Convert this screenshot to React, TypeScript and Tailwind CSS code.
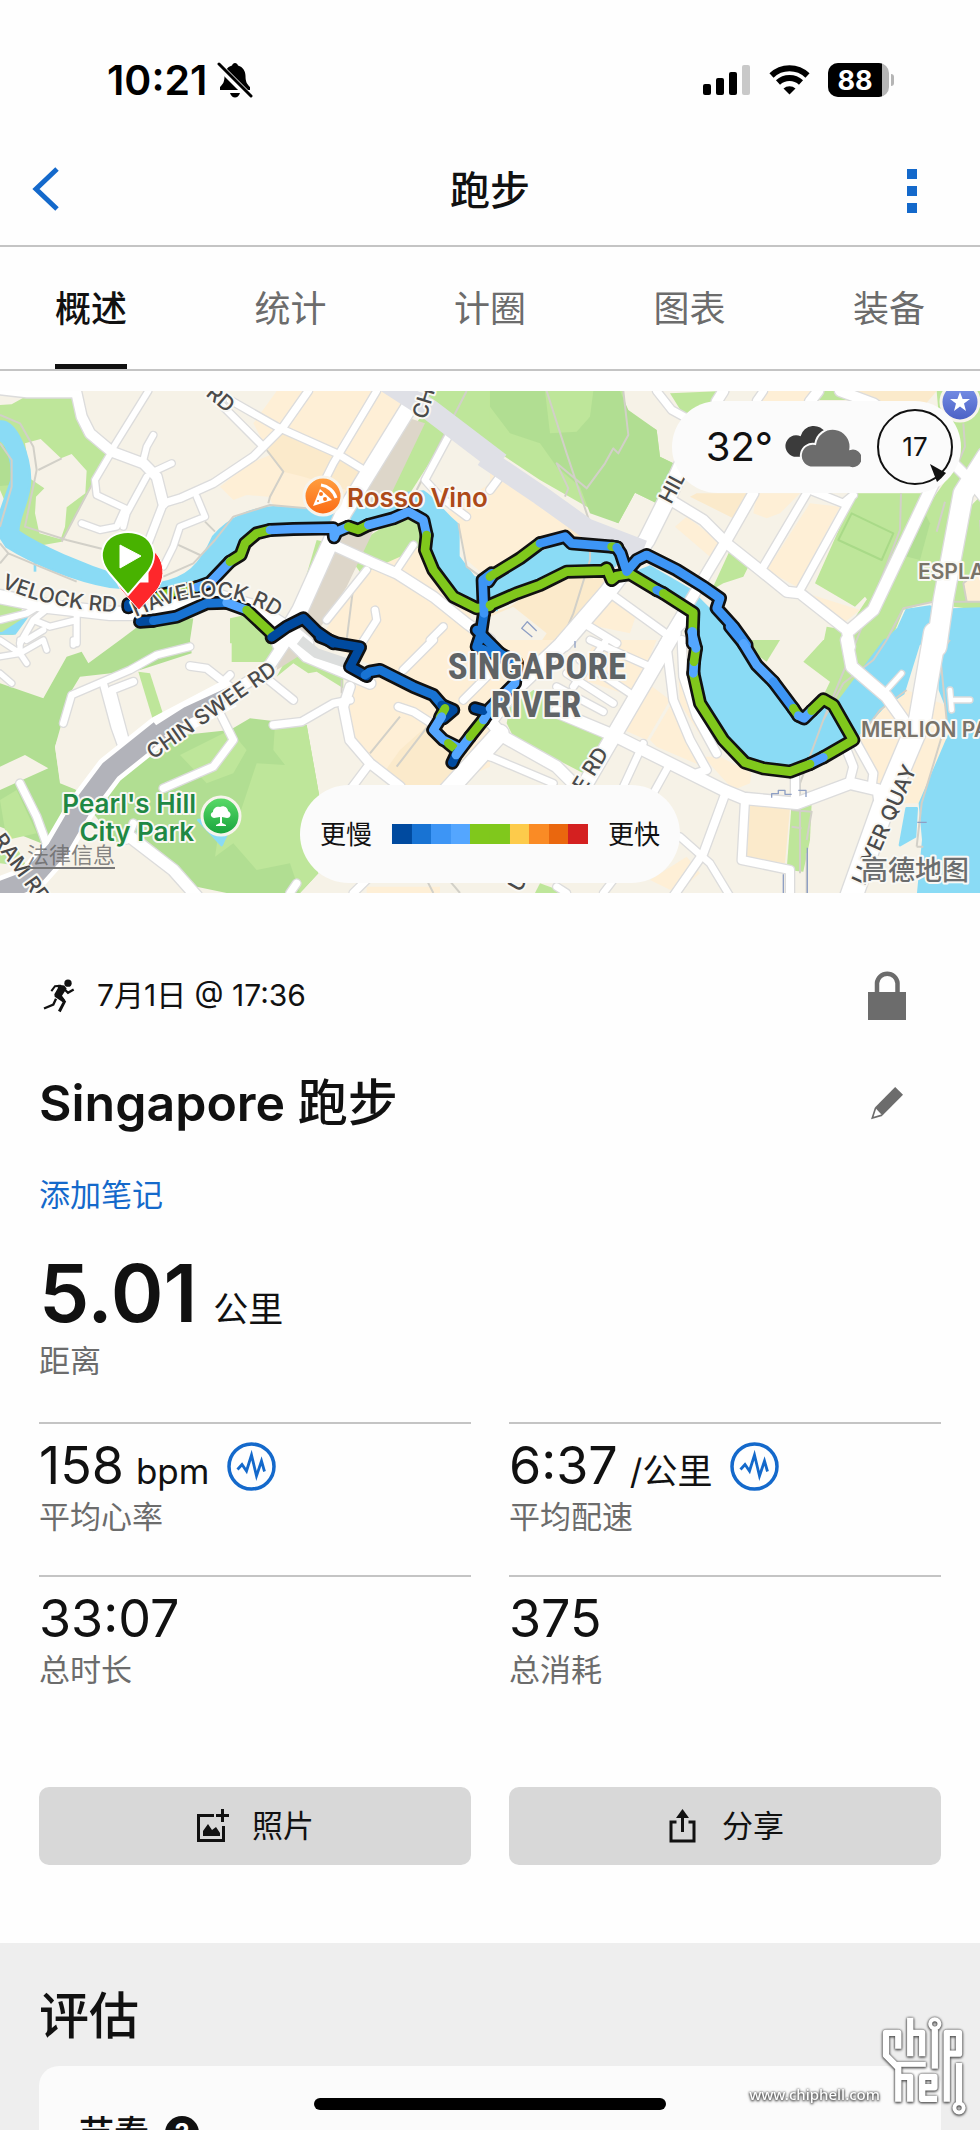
import type { ReactNode } from 'react'

const tabs = ['概述', '统计', '计圈', '图表', '装备']

const paceColors = [
  '#004a9f', '#1873d3', '#3d95f5', '#54a6ff', '#80c81c',
  '#80c81c', '#fdcb4b', '#fa8b25', '#ea670e', '#d42020',
]

type Road = [width: number, d: string]

type Sheet = {
  x: number
  y: number
  areas: [fill: string, d: string][]
  water: string[]
  paths: string
  roads: Road[]
  highways: [color: string, width: number, d: string][]
  route: [color: string, d: string][]
}

const PARK = '#bee69a'
const WOOD = '#b1de92'
const SHOP = '#feefd6'
const MALL = '#fbeacb'
const LAND = '#f6f2e7'
const RAIL = '#ddd6c9'

const NAVY = '#004a9f'
const BLUE = '#1873d3'
const MID = '#3d95f5'
const SKY = '#54a6ff'
const LIME = '#80c81c'

// The map is split into four sheets, three units to a pixel.
const sheets: Sheet[] = [
  {
    x: 0,
    y: -33,
    areas: [
      [PARK, 'M0 75 35 73 85 45H228L245 120 265 160 325 225 185 485 100 500 60 470 0 330Z'],
      [LAND, 'M75 190 122 177 183 235 215 222 260 272 256 340 200 382 195 440 182 478 118 460 105 400 108 350 133 325 93 298Z'],
      [WOOD, 'M0 190 25 210 35 250V315L0 318Z'],
      [SHOP, 'M830 33H1240L1020 400 820 375 805 350 740 345 700 360 660 320 740 255 810 225 760 130Z'],
      [MALL, 'M800 210 850 145 1015 220 1095 275 1040 330 910 290 850 275Z'],
      [PARK, 'M1290 33H1470V240L1270 105Z'],
      [PARK, 'M1265 105 1345 160 1230 340 1110 350Z'],
      [PARK, 'M1120 460 1200 410 1260 430 1260 500 1200 540 1160 560 1040 520Z'],
      [PARK, 'M950 480 990 490 940 590 915 600Z'],
      [PARK, 'M1040 520 1170 580 1160 675 1090 590Z'],
      [LAND, 'M1270 300 1360 170 1470 230V320L1390 410Z'],
      [SHOP, 'M1340 400 1470 310V600L1400 540 1375 430Z'],
      [SHOP, 'M1200 530 1260 500 1340 620 1410 700 1430 790H950L1090 580Z'],
      [RAIL, 'M1215 110 1275 130 1040 620 930 790H820L990 490Z'],
      [PARK, 'M0 650 60 655 70 720 40 765 0 765Z'],
      [WOOD, 'M360 780 420 735 580 715 570 780Z'],
      [PARK, 'M690 715 760 700 860 765 830 790H690Z'],
    ],
    water: [
      'M0 125C50 120 90 230 90 300C90 360 50 420 55 455C120 500 250 555 360 590L480 610C560 595 600 560 640 470C690 410 760 385 820 382L1020 395 1160 370 1210 340 1270 335C1310 360 1320 390 1375 435V530L1420 590 1490 620V690L1380 650 1300 560 1290 430 1220 400 1100 440 820 460 740 480 700 550 630 620 560 640 330 620C220 600 100 550 20 500L0 470V400L35 300C40 240 20 190 0 180Z',
      'M105 540V575',
      'M0 760H45L85 705',
    ],
    paths:
      'M0 105 60 130 100 200 110 270 75 440 200 480 320 510M115 270 185 235M0 190 35 240V320L0 440M0 490 25 520 120 560 230 605M0 550 25 520M320 230 185 485M800 210 850 275 810 350 805 370M490 590 580 550 645 480 700 410 810 375 920 385M1340 160 1250 330M525 490 600 525M615 425 645 455M1400 33 1350 130 1250 330M1375 430 1400 560 1470 610M1060 620 1040 780',
    roads: [
      [20, 'M0 33 80 42H225M1130 33 1000 250 960 330M690 60 830 140 1010 220 1100 275M650 60 790 200M1240 495 1190 570M1100 570 980 720M1125 690 1130 720 1085 790M1345 170 1275 300 1320 350 1400 410M1330 740 1290 780'],
      [18, 'M445 33 335 210M430 240 440 200 460 165M450 280 515 250M335 215 285 300 290 345 375 385 350 440 300 450 245 430M440 290 380 400 370 440M590 350 615 410 540 440 520 500 490 560'],
      [18, 'M150 680 100 720 60 790M230 700V790M130 750 80 780M230 720 150 740 100 720M0 720 80 700 130 670'],
      [30, 'M228 33 245 110 270 160 335 215 430 250 470 290 490 370M1010 500 1120 550 1190 580 1300 650 1400 730 1470 780'],
      [22, 'M490 370 540 355 640 310 760 230 850 140 925 33M490 370 440 500 400 600'],
      [46, 'M1240 60 1030 400 990 490 900 690 840 790'],
      [40, 'M0 650 150 680 330 700 430 700 560 660 640 645 760 680 870 750 920 790'],
    ],
    highways: [['#dfe0e6', 64, 'M1150 0 1290 90 1500 250']],
    route: [
      [LIME, 'M480 645 590 622'],
      [SKY, 'M590 622 630 608 690 545'],
      [LIME, 'M690 545 722 525 735 490 770 460 810 450'],
      [SKY, 'M810 450 880 447 1000 445 1002 472 1010 455 1045 440'],
      [LIME, 'M1045 440 1075 450 1105 435'],
      [SKY, 'M1105 435 1180 415 1225 395 1270 420 1280 465'],
      [LIME, 'M1280 465 1275 510 1300 570 1360 650 1430 685 1470 680'],
      [NAVY, 'M420 725 460 722'],
      [BLUE, 'M460 722 530 710 620 670 680 668'],
      [SKY, 'M680 668 740 690'],
      [LIME, 'M740 690 820 765'],
      [NAVY, 'M815 772 860 740 910 715 950 755 1000 790'],
      [NAVY, 'M385 672V682'],
      [BLUE, 'M1440 780 1452 700'],
      [MID, 'M1452 700 1448 600 1475 580'],
    ],
  },
  {
    x: 1470,
    y: -33,
    areas: [
      [PARK, 'M0 33H400L410 95 500 150 510 230 550 250 520 320 500 370 435 338 385 430 325 400 150 300 0 200Z'],
      [WOOD, 'M0 33H390L415 90 500 150 510 230 550 250 500 370 435 338 385 430 300 400 270 320 200 260 150 190 60 160 0 80Z'],
      [PARK, 'M165 33H310L300 110 260 155 180 160Z'],
      [PARK, 'M540 40 700 33 660 80 590 120Z'],
      [PARK, 'M980 33H1170L1100 60H960Z'],
      [PARK, 'M1095 340H1310L1140 670 1125 650 1095 680 975 610Z'],
      [PARK, 'M1340 340 1440 200 1340 660 1240 690 1200 790H1000L1010 740 1070 750Z'],
      [WOOD, 'M1290 370 1320 430 1290 540 1210 520Z'],
      [PARK, 'M1340 33H1470V250L1430 310 1350 150Z'],
      [PARK, 'M1420 400 1470 350V690L1390 680Z'],
      [PARK, 'M720 510 775 560 760 590 700 610 665 630Z'],
      [MALL, 'M0 280 30 270 320 430 470 500 340 650 200 790H0V700L60 680 220 560 380 540 200 480 0 580Z'],
      [SHOP, 'M0 280 30 270 240 400 230 470 0 570Z'],
      [LAND, 'M70 680 170 760 150 790H0V710Z'],
      [SHOP, 'M590 410 695 490 660 530 555 440Z'],
      [MALL, 'M620 340H780L740 420 650 375 600 350Z'],
      [SHOP, 'M800 340H930L870 400 830 415 790 400Z'],
      [SHOP, 'M960 370 1050 380 920 620 830 570Z'],
      [SHOP, 'M950 640 1110 690 1060 730 960 680Z'],
      [SHOP, 'M340 650 440 700 420 760 300 735Z'],
      [SHOP, 'M830 33H970L940 65H800Z'],
      [MALL, 'M1080 33H1340L1300 80H1150Z'],
      [SHOP, 'M1420 600 1470 560V665H1430Z'],
    ],
    water: [
      'M0 600 100 540 220 490 370 510 430 580 480 560 600 630 660 690 760 800H600L610 700 520 640 420 580 230 570 80 640 0 670Z',
      'M1180 790 1225 745 1250 690 1320 680 1345 690 1490 685V790Z',
    ],
    paths:
      'M400 33 415 165 385 220 370 205 345 250 290 325 200 250 235 325 225 350M170 33 230 220 300 430V540L250 700 215 780M1233 340 1230 450 1180 580 1100 780M1470 665H1330L1240 685 1190 780M1365 365 1340 455M1420 130 1425 200 1400 260M1470 420 1480 560 1420 610 1430 665',
    roads: [
      [22, 'M500 33 545 90 600 120M820 33 800 62M0 330 30 290M950 340 820 560M960 330 1060 370 1090 345M1085 350 930 630M360 640 540 770M600 710 520 790M290 735 380 790'],
      [30, 'M550 365 640 420 710 490 810 570 890 635 930 640 1070 750 1080 800M790 340 710 480 530 780'],
      [30, 'M1050 33 1150 70 1350 210 1440 300 1480 350M700 33 680 65M985 33 960 65'],
      [34, 'M1330 310 1150 690 1080 750'],
      [48, 'M610 180 530 360 470 480 350 640 220 790'],
      [58, 'M1490 230 1420 340 1360 660 1340 800'],
    ],
    highways: [['#dfe0e6', 60, 'M-20 230 150 345 290 445 460 510']],
    route: [
      [MID, 'M-5 605 5 590'],
      [LIME, 'M0 590 90 535 150 490'],
      [MID, 'M150 490 225 470 245 490 370 500'],
      [LIME, 'M365 500 382 502'],
      [LIME, 'M0 675 80 640 150 615 230 575 340 572 350 565 365 600 380 588 420 582 500 630'],
      [MID, 'M500 630 520 640'],
      [LIME, 'M520 640 610 698 608 755'],
      [SKY, 'M608 755V790'],
      [MID, 'M380 502 392 520 410 575 440 540 470 525 560 570 640 620 690 655 680 685 730 740 770 795'],
    ],
  },
  {
    x: 0,
    y: 747,
    areas: [
      [WOOD, 'M0 130 130 175 200 50 245 35 265 70 360 0H570L575 40 420 90 240 110 210 160 165 320 180 430 230 450 150 620 0 560V450L145 385 75 345 0 380Z'],
      [LAND, 'M165 320 215 180 310 140 350 300 290 265 320 320 230 450 180 420Z'],
      [LAND, 'M325 150 420 100 465 260 380 290Z'],
      [PARK, 'M415 95 450 100 495 240 465 260Z'],
      [PARK, 'M695 0H850L800 66H695Z'],
      [PARK, 'M890 0 1030 110V145L950 95 925 100 880 70 830 110Z'],
      [WOOD, 'M385 380 500 290 690 270 750 235 920 255 960 480 905 560 955 700 900 759H680L590 740 400 590 360 620 240 470Z'],
      [PARK, 'M825 252 920 255 960 480 905 560 955 700 900 759 870 670 770 690 700 610 645 650 660 550 720 520 770 370 855 375 820 330Z'],
      [PARK, 'M540 345 690 270 740 330 700 400 620 430Z'],
      [PARK, 'M0 480 50 450 110 580 20 600Z'],
      [PARK, 'M0 640 50 620 80 680 0 670Z'],
      [LAND, 'M150 740 400 590 590 759H130Z'],
      [SHOP, 'M1000 0H1470V380L1330 440H1190L1050 310 1040 220 1060 140 1170 100 990 20Z'],
      [MALL, 'M1200 330 1290 250 1370 380 1320 435H1210L1150 400Z'],
      [SHOP, 'M1100 740H1320V759H1100Z'],
      [RAIL, 'M870 0 910 40 830 90 840 30Z'],
    ],
    water: ['M595 540H700L665 615Z'],
    paths: 'M1200 230 1110 340M1290 250 1190 380M1025 120V160M0 740 30 700M1300 759 1270 700M1380 759 1330 700',
    roads: [
      [16, 'M0 50 60 40 80 70M60 40 130 0 140 30M220 0V15M0 0 60 40M0 100 35 130M60 0V40'],
      [22, 'M570 78 620 85 690 140M670 125 690 105M820 255 905 245 1000 190 1050 180M800 115 880 180M660 220 700 300 640 380 490 445M310 130 345 260 370 330M400 125 335 150 375 300M60 430 110 530 150 640M400 550 380 600M1195 200 1240 215 1310 260M1300 0 1210 90M1470 100 1390 180M1440 330 1470 350M890 730 870 759M1110 370 1050 450M1100 720 1060 759'],
      [20, 'M190 250 215 165 390 90 470 45 570 20'],
      [34, 'M390 590 520 690 590 769'],
      [28, 'M1050 140 1030 200 1050 300 1110 370 1200 440'],
      [32, 'M860 0 800 90 690 160M870 0 920 50 1040 100 1110 130'],
      [52, 'M1500 280 1300 500'],
    ],
    highways: [
      ['#ffffff', 88, 'M-40 770 90 720 170 630 240 510 330 390 480 270 690 160'],
      ['#b2b3ba', 60, 'M-40 770 90 720 170 630 240 510 330 390 480 270'],
      ['#b2b3ba', 38, 'M450 290 560 220 690 160'],
      ['#dcdedd', 30, 'M900 0 950 40 1040 70'],
    ],
    route: [
      [NAVY, 'M960 -10 1010 10 1080 22 1050 80 1100 108'],
      [BLUE, 'M1095 105 1110 95 1140 90 1240 140 1300 165 1330 200'],
      [NAVY, 'M1325 195 1360 210 1330 235'],
      [LIME, 'M1335 205 1320 232'],
      [SKY, 'M1325 230 1300 270 1330 300 1380 325'],
      [LIME, 'M1345 310 1360 322'],
      [NAVY, 'M1357 368 1370 340'],
      [SKY, 'M1368 345 1410 290'],
      [LIME, 'M1410 290 1450 240'],
      [SKY, 'M1450 240 1470 210'],
      [NAVY, 'M1425 205 1450 212'],
      [BLUE, 'M1440 -10 1430 20 1500 50'],
    ],
  },
  {
    x: 1470,
    y: 747,
    areas: [
      [SHOP, 'M0 0H200L60 150 0 200Z'],
      [SHOP, 'M320 0H500L430 170 250 110Z'],
      [SHOP, 'M380 260 460 120 540 180 470 300Z'],
      [SHOP, 'M480 300 545 190 640 380 500 320Z'],
      [SHOP, 'M560 0H590L610 130 690 345 640 300 570 190Z'],
      [SHOP, 'M640 350 690 350 785 400 780 430 730 450Z'],
      [PARK, 'M60 200 130 150 220 210 380 290 280 400 70 290 50 250Z'],
      [PARK, 'M735 0H870L830 65Z'],
      [PARK, 'M940 65 1000 0H1190L1140 80 1040 250 960 250 1020 125Z'],
      [MALL, 'M780 490 900 505 885 670 770 655Z'],
      [PARK, 'M905 490H965L960 600 940 695 890 690Z'],
      [SHOP, 'M480 720 590 650 630 700 560 759Z'],
      [PARK, 'M135 759 150 730 230 759Z'],
      [SHOP, 'M1110 290 1160 200 1250 150 1380 200 1370 300 1290 490H1210L1160 430Z'],
    ],
    water: [
      'M605 -20 620 110 660 240 760 360 900 395 1090 310 1010 190 940 240 830 110 700 -20Z',
      'M1185 0 1140 60 1020 220 1090 300 1180 200 1240 160 1290 0Z',
      'M1345 0H1480V759H1285L1300 600 1290 490 1380 280 1370 200 1350 150Z',
      'M1250 505 1280 505 1275 590 1230 615Z',
    ],
    paths:
      'M1380 0 1350 40 1370 240 1295 490 1280 620M1190 0 1150 60 1060 130 1000 240M1100 0 1000 240 930 430V700M905 510 965 515 950 600M905 560 935 565M1110 290 1170 210 1250 150M1280 620H1300M950 640V759',
    roads: [
      [14, 'M1385 180H1440M1385 210 1380 150M1235 100 1190 150'],
      [20, 'M300 0 480 80M270 60 420 160M230 100 370 190M200 140 340 215M350 0 250 140M0 350 190 430M460 310 400 440M540 370 490 460M340 759 370 720M570 590 660 670 720 769M200 740 230 759'],
      [24, 'M530 20 550 180 600 300 650 390 620 400M575 0 580 110 620 230 680 340M710 450 640 640 550 769M765 480 755 660 900 690V769M915 400V490M1070 330 1090 380 1080 420M1100 310 1150 400 1145 440'],
      [34, 'M-10 230 40 290 200 380 260 440M200 215 380 290 700 450 760 475 920 490 1080 430 1165 450 1175 520 1140 600M1070 0 1085 80 1190 170 1240 240'],
      [44, 'M240 -10 60 160 0 240M550 -20 270 460'],
      [66, 'M1335 -20 1290 240 1180 500 1080 780'],
    ],
    highways: [],
    route: [
      [BLUE, 'M-40 -30 30 40'],
      [BLUE, 'M30 40 80 68'],
      [SKY, 'M80 68 75 130 0 205'],
      [MID, 'M720 -40 765 15'],
      [SKY, 'M760 10 800 75 850 125'],
      [MID, 'M850 125 910 205'],
      [LIME, 'M910 205 925 227'],
      [SKY, 'M925 227 942 235 965 212'],
      [LIME, 'M965 212 1000 178 1030 195 1090 300 1000 352'],
      [SKY, 'M1000 352 960 372'],
      [LIME, 'M960 372 900 395 820 385 765 368 700 300 630 190 610 100'],
      [SKY, 'M610 100 612 65'],
      [LIME, 'M612 65 618 25'],
      [SKY, 'M618 25 605 -25'],
    ],
  },
]

function Layer({ draw }: { draw: (sheet: Sheet) => ReactNode }) {
  return (
    <>
      {sheets.map((sheet) => (
        <g key={`${sheet.x}/${sheet.y}`} transform={`translate(${sheet.x} ${sheet.y})`}>
          {draw(sheet)}
        </g>
      ))}
    </>
  )
}

function RouteMap() {
  return (
    <svg viewBox="0 0 980 502" className="block h-auto w-full bg-[#f6f2e7]" role="img" aria-label="Singapore 跑步路线">
      <defs>
        <path id="havelock-west" d="M1 196 C 30 210, 80 222, 130 221" />
        <path id="havelock-east" d="M136 226 C 176 208, 230 186, 292 238" />
        <linearGradient id="food" x1="0" x2="0" y1="0" y2="1">
          <stop offset="0" stopColor="#ff9f3f" />
          <stop offset="1" stopColor="#fb6a14" />
        </linearGradient>
        <linearGradient id="tree" x1="0" x2="0" y1="0" y2="1">
          <stop offset="0" stopColor="#5bdc69" />
          <stop offset="1" stopColor="#17a33c" />
        </linearGradient>
        <linearGradient id="star" x1="0" x2="0" y1="0" y2="1">
          <stop offset="0" stopColor="#7c95ea" />
          <stop offset="1" stopColor="#4a5fc4" />
        </linearGradient>
      </defs>

      <g transform="scale(0.33333)" fill="none" strokeLinejoin="round">
        <Layer draw={(s) => s.areas.map(([fill, d]) => <path key={d} d={d} fill={fill} />)} />
        <Layer
          draw={(s) => s.water.map((d) => <path key={d} d={d} fill="#8adbf5" stroke="#8adbf5" strokeWidth="8" />)}
        />
        <Layer draw={(s) => <path d={s.paths} stroke="#d2d0c8" strokeWidth="6" />} />
        <path d="M2555 367 2680 427 2645 507 2515 447Z" stroke="#a9da88" strokeWidth="6" />
        <Layer
          draw={(s) =>
            s.roads.map(([w, d]) => <path key={d} d={d} stroke="#dcdcdc" strokeWidth={w + 8} strokeLinecap="round" />)
          }
        />
        <Layer
          draw={(s) => s.roads.map(([w, d]) => <path key={d} d={d} stroke="#fff" strokeWidth={w} strokeLinecap="round" />)}
        />
        <Layer draw={(s) => s.highways.map(([c, w, d]) => <path key={d + c} d={d} stroke={c} strokeWidth={w} />)} />
        <g stroke="#8e9fc4" strokeWidth="4">
          <path d="M1610 720 1582 692 1565 712 1597 738M2315 1220V1208H2335V1198H2355V1210H2375M2395 1198H2418V1218M2752 1294H2780" />
          <path d="M1725 750V770M2350 1450V1506M2422 1370V1506" />
        </g>
        <Layer
          draw={(s) =>
            s.route.map(([, d]) => <path key={d} d={d} stroke="#111" strokeWidth="42" strokeLinecap="round" />)
          }
        />
        <Layer
          draw={(s) =>
            s.route.map(([c, d]) => <path key={d} d={d} stroke={c} strokeWidth="26" strokeLinecap="round" />)
          }
        />
      </g>

      <g
        className="font-['Inter',sans-serif] text-[21px] font-medium"
        fill="#4a4a4a"
        stroke="#f9f8f4"
        strokeWidth="4"
        strokeLinejoin="round"
        paintOrder="stroke"
      >
        <text>
          <textPath href="#havelock-west">VELOCK RD</textPath>
        </text>
        <text>
          <textPath href="#havelock-east">HAVELOCK RD</textPath>
        </text>
        <text transform="translate(153 369) rotate(-35)">CHIN SWEE RD</text>
        <text transform="translate(205 4) rotate(40)">RD</text>
        <text transform="translate(426 29) rotate(-73)">CH</text>
        <text transform="translate(671 114) rotate(-62)">HIL</text>
        <text transform="translate(584 402) rotate(-58)">E RD</text>
        <text transform="translate(917 378) rotate(-66)" textAnchor="end">
          LLYER QUAY
        </text>
        <text transform="translate(520 502) rotate(-60)">U</text>
        <text transform="translate(-8 449) rotate(54)">RAM RD</text>
        <g fill="#79746a" className="font-semibold">
          <text x="918" y="188">ESPLANADE</text>
          <text x="861" y="346">MERLION PARK</text>
        </g>
        <g
          fill="#5f6365"
          textAnchor="middle"
          className="font-['Roboto_Condensed',sans-serif] text-[37px] font-bold"
        >
          <text x="537" y="288">SINGAPORE</text>
          <text x="536" y="326">RIVER</text>
        </g>
        <g className="text-[26px] font-semibold">
          <text x="347" y="116" fill="#ad4a19">Rosso Vino</text>
          <text x="196" y="422" fill="#1f8843" textAnchor="end">Pearl's Hill</text>
          <text x="194" y="450" fill="#1f8843" textAnchor="end">City Park</text>
        </g>
        <text
          x="861"
          y="489"
          fill="#6b6d6e"
          className="font-['Noto_Sans_CJK_SC',sans-serif] text-[27px] font-medium"
        >
          高德地图
        </text>
      </g>

      <g stroke="#f7f4ec" strokeWidth="3">
        <circle cx="323" cy="105" r="19" fill="url(#food)" />
        <circle cx="221" cy="425" r="19" fill="url(#tree)" />
        <circle cx="960" cy="11" r="19" fill="url(#star)" />
      </g>
      <g fill="#fff">
        <path d="M313 115 320 98 332 109Z" />
        <path d="M321 94C328 95 334 100 336 107" fill="none" stroke="#fff" strokeWidth="3" />
        <g fill="#fb7a1e">
          <circle cx="321" cy="103" r="2" />
          <circle cx="325" cy="108" r="2" />
          <circle cx="318" cy="110" r="1" />
        </g>
        <path d="M216 435V434L220 432V426L214 427C210 426 210 422 213 421C213 417 217 415 220 416C224 414 228 417 228 420C232 422 231 427 227 427L222 426V432L226 434V435Z" />
        <path d="M960 1 962.600 8H970L964 12.500 966 20 960 15.500 954 20 956 12.500 950 8H957.400Z" />
      </g>

      <g stroke="#fff" strokeWidth="1">
        <path d="M139 219 122 200C108 184 116 155 139 155C162 155 170 184 156 200Z" fill="#fe272b" />
        <rect x="136" y="179" width="12" height="12" fill="#fff" />
        <path d="M128 204 110 183C93 163 105 141 128 141C151 141 163 163 146 183Z" fill="#48b200" strokeWidth="2" />
        <path d="M120 154 141 165 120 177Z" fill="#fff" />
      </g>
    </svg>
  )
}

function WeatherBadge() {
  return (
    <div className="absolute top-[10px] right-[19px] flex h-[92px] items-center rounded-full bg-[#fbfbfb] pr-2 pl-[34px]">
      <span className="text-[40px] leading-none">32°</span>
      <svg viewBox="0 0 78 44" className="ml-3 h-11 w-[76px]" aria-label="多云">
        <path d="M12 32A11 11 0 1 1 16 11A14 14 0 0 1 42 8L30 32Z" fill="#3b3b3b" />
        <path
          d="M26 43A12 12 0 1 1 31 19A18 18 0 0 1 67 24A10 10 0 1 1 66 43Z"
          fill="#6c6c6c"
          stroke="#fbfbfb"
          strokeWidth="2"
        />
      </svg>
      <div className="relative ml-4 flex size-[76px] items-center justify-center rounded-full border-2 border-[#111]">
        <span className="text-[26px] leading-none">17</span>
        <svg viewBox="0 0 18 20" className="absolute right-1 bottom-0 h-5 w-[18px]" aria-hidden="true">
          <path d="M1 1 17 10Q12 16 8 19Z" fill="#111" />
        </svg>
      </div>
    </div>
  )
}

function PaceLegend() {
  return (
    <div className="absolute bottom-[10px] left-1/2 flex h-[98px] -translate-x-1/2 items-center gap-5 rounded-full bg-[#fbfbfb] px-5 text-[26px] whitespace-nowrap">
      <span>更慢</span>
      <div className="grid h-5 w-[196px] grid-cols-10">
        {paceColors.map((color, i) => (
          <span key={i} style={{ backgroundColor: color }} />
        ))}
      </div>
      <span>更快</span>
    </div>
  )
}

function StatusBar() {
  return (
    <div className="flex h-[136px] shrink-0 items-center justify-between pt-6 pr-[86px] pl-[107px] text-black">
      <div className="flex items-center gap-2.5">
        <span className="text-[41px] leading-none font-semibold">10:21</span>
        <svg viewBox="0 0 36 36" className="size-9" aria-label="静音">
          <path
            d="M18 1C19.500 1 20.500 2 21 3.500C26 5 28.500 9 28.500 14C28.500 20 30 22 33 25V28H3V25C6 22 7.500 20 7.500 14C7.500 9 10 5 15 3.500C15.500 2 16.500 1 18 1Z"
            fill="currentColor"
          />
          <path d="M13 31H23C22 34 20 35.500 18 35.500S14 34 13 31Z" fill="currentColor" />
          <path d="M1 3 33 35" stroke="#fefefe" strokeWidth="7" />
          <path d="M2 2 34 34" stroke="currentColor" strokeWidth="3" strokeLinecap="round" />
        </svg>
      </div>
      <div className="flex items-center gap-[18px]">
        <svg viewBox="0 0 48 32" className="h-8 w-12" aria-label="信号">
          <rect x="0" y="20" width="8" height="11" rx="2" />
          <rect x="13" y="14" width="8" height="17" rx="2" />
          <rect x="26" y="8" width="8" height="23" rx="2" />
          <rect x="39" y="1" width="8" height="30" rx="2" fill="#c9c9c9" />
        </svg>
        <svg viewBox="0 0 41 30" className="h-[30px] w-[41px]" fill="none" stroke="currentColor" aria-label="无线网络">
          <path d="M2.500 10.500A26 26 0 0 1 38.500 10.500" strokeWidth="6" />
          <path d="M9 17.500A17 17 0 0 1 32 17.500" strokeWidth="6" />
          <path d="M20.500 29.500 14.500 23.500A9 9 0 0 1 26.500 23.500Z" fill="currentColor" stroke="none" />
        </svg>
        <div className="flex items-center gap-[2px]">
          <div className="flex h-[34px] items-stretch overflow-hidden rounded-[10px] bg-[#b5b5b5] pr-[7px]">
            <span className="flex w-[54px] items-center justify-center bg-black text-[27px] leading-none font-bold text-white">
              88
            </span>
          </div>
          <span className="h-3 w-[3px] rounded-r-full bg-[#b5b5b5]" />
        </div>
      </div>
    </div>
  )
}

function NavBar() {
  return (
    <header className="flex h-[111px] shrink-0 items-center justify-between border-b-2 border-[#c4c4c4] pr-[52px] pl-8 text-[#1469cb]">
      <button type="button" aria-label="返回" className="w-[52px]">
        <svg viewBox="0 0 27 44" className="mb-1 h-11 w-[27px]" fill="none" stroke="currentColor" strokeWidth="5">
          <path d="M25 2 4 22 25 42" />
        </svg>
      </button>
      <h1 className="text-[40px] leading-none font-medium text-[#111]">跑步</h1>
      <button type="button" aria-label="更多" className="flex w-[32px] flex-col items-center gap-[7px]">
        <span className="size-[10px] bg-current" />
        <span className="size-[10px] bg-current" />
        <span className="size-[10px] bg-current" />
      </button>
    </header>
  )
}

function Tabs() {
  return (
    <nav className="flex h-[124px] shrink-0 justify-between border-b-2 border-[#c4c4c4] px-[55px] text-[36px]">
      {tabs.map((tab, i) => (
        <button
          key={tab}
          type="button"
          className={
            i === 0
              ? 'border-b-[5px] border-[#111] pt-1.5 font-medium text-[#111]'
              : 'border-b-[5px] border-transparent pt-1.5 text-[#6c6c6c]'
          }
        >
          {tab}
        </button>
      ))}
    </nav>
  )
}

function RunnerIcon() {
  return (
    <svg viewBox="130 112 96 104" className="h-[35px] w-8" fill="none" stroke="currentColor" aria-label="跑步">
      <circle cx="205" cy="127" r="11" fill="currentColor" stroke="none" />
      <path d="M176 132 194 134 201 143 187 165 197 178 192 186 165 168 164 160 174 143Z" fill="currentColor" stroke="none" />
      <path d="M192 143 205 156 222 146" strokeWidth="7" />
      <path d="M184 135 166 136 155 151" strokeWidth="6" />
      <path d="M180 168 194 183 179 212" strokeWidth="9" />
      <path d="M169 174 161 191 133 203" strokeWidth="7" />
    </svg>
  )
}

function PulseButton({ label }: { label: string }) {
  return (
    <button type="button" aria-label={label} className="text-[#1469cb]">
      <svg viewBox="0 0 49 49" className="size-[49px]" fill="none" stroke="currentColor">
        <circle cx="24.500" cy="24.500" r="22.500" strokeWidth="3.500" />
        <path d="M10.500 27.500 15 22.500 19.500 29 24.500 13 29.500 34 34.500 19 37.500 29.500" strokeWidth="2.800" strokeMiterlimit="10" />
      </svg>
    </button>
  )
}

type StatProps = { value: string; unit?: string; label: string; chart?: boolean }

function Stat({ value, unit, label, chart }: StatProps) {
  return (
    <div className="border-t-2 border-[#c4c4c4] pt-[11px] pb-[38px]">
      <div className="flex h-[62px] items-center gap-[18px]">
        <p className="text-[52px] leading-[62px]">
          {value}
          {unit && <span className="ml-3 text-[35px] leading-none">{unit}</span>}
        </p>
        {chart && <PulseButton label={`${label}图表`} />}
      </div>
      <p className="text-[31px] leading-10 text-[#6c6c6c]">{label}</p>
    </div>
  )
}

function Summary() {
  return (
    <section className="px-[39px] pt-[78px] pb-[78px]">
      <div className="flex h-12 items-center justify-between pr-[34px]">
        <div className="flex items-center gap-[22px] pl-1">
          <RunnerIcon />
          <p className="text-[30px] leading-10">7月1日 @ 17:36</p>
        </div>
        <svg viewBox="0 0 40 50" className="h-[50px] w-10 text-[#6c6c6c]" aria-label="私密">
          <rect x="1" y="22" width="38" height="28" fill="currentColor" />
          <path d="M10 23V13A10.300 10.300 0 0 1 30.500 13V23" fill="none" stroke="currentColor" strokeWidth="4.500" />
        </svg>
      </div>

      <div className="mt-[54px] flex h-[60px] items-center justify-between pr-[34px]">
        <h2 className="text-[50px] leading-[60px] font-semibold">
          Singapore <span className="font-medium">跑步</span>
        </h2>
        <button type="button" aria-label="编辑名称" className="flex w-10 justify-center text-[#6c6c6c]">
          <svg viewBox="0 0 104 104" className="size-[34px]">
            <path d="M77 3 101 27 38 90 15 66Z" fill="currentColor" />
            <path d="M17 67 7 98 37 89" fill="none" stroke="currentColor" strokeWidth="5" />
          </svg>
        </button>
      </div>

      <a href="#notes" className="mt-[42px] block text-[31px] leading-10 text-[#1469cb]">
        添加笔记
      </a>

      <p className="mt-[30px] text-[80px] leading-[96px] font-semibold">
        5.01<span className="ml-4 text-[35px] leading-none font-normal">公里</span>
      </p>
      <p className="text-[31px] leading-10 text-[#6c6c6c]">距离</p>

      <div className="mt-[41px] grid grid-cols-2 gap-x-[38px]">
        <Stat value="158" unit="bpm" label="平均心率" chart />
        <Stat value="6:37" unit="/公里" label="平均配速" chart />
        <Stat value="33:07" label="总时长" />
        <Stat value="375" label="总消耗" />
      </div>

      <div className="mt-[59px] grid grid-cols-2 gap-x-[38px] text-[31px]">
        <button type="button" className="flex h-[78px] items-center justify-center gap-[22px] rounded-[10px] bg-[#d8d8d8]">
          <svg viewBox="0 0 34 34" className="size-[34px]" fill="none" stroke="currentColor" strokeWidth="3">
            <path d="M18 6.500H2.500V31.500H27.500V17" />
            <path d="M26.500 0V13M20 6.500H33" />
            <path d="M7 27V22L12 15 16 21 20 18 24 24V27Z" fill="currentColor" stroke="none" />
          </svg>
          照片
        </button>
        <button type="button" className="flex h-[78px] items-center justify-center gap-[22px] rounded-[10px] bg-[#d8d8d8]">
          <svg viewBox="0 0 34 34" className="size-[34px]" fill="none" stroke="currentColor" strokeWidth="3">
            <path d="M10.500 13H5V32H28V13H22.500M16.500 23V5" />
            <path d="M10 9 16.500 0 23 9Z" fill="currentColor" stroke="none" />
          </svg>
          分享
        </button>
      </div>
    </section>
  )
}

function Assessment() {
  return (
    <section className="grow bg-[#eeeeee] px-[39px] pt-[43px]">
      <h2 className="text-[50px] leading-[60px] font-medium">评估</h2>
      <div className="mt-5 rounded-t-[20px] bg-[#fbfbfb] px-10 pt-[42px] pb-20">
        <h3 className="flex items-center gap-4 text-[35px] leading-[50px] font-medium">
          节奏
          <button
            type="button"
            aria-label="关于节奏"
            className="flex size-[34px] items-center justify-center rounded-full bg-[#111] text-[26px] leading-none font-bold text-white"
          >
            ?
          </button>
        </h3>
      </div>
    </section>
  )
}

function Watermark() {
  return (
    <div className="absolute right-3 bottom-[11px] flex items-end text-white drop-shadow-[0_1px_1px_#555]">
      <span className="mb-[13px] font-['Noto_Sans',sans-serif] text-[15px] leading-6 font-medium drop-shadow-[0_0_1px_#555]">
        www.chiphell.com
      </span>
      <svg
        viewBox="450 75 265 310"
        className="h-[104px] w-[88px] drop-shadow-[0_0_1px_#555]"
        fill="none"
        stroke="currentColor"
        strokeWidth="19"
        strokeLinejoin="round"
        aria-label="chiphell"
      >
        <path d="M505 175V127H468V195L505 232V335" />
        <path d="M541 82V198M541 127H577V198" />
        <path d="M615 118V235" />
        <path d="M651 335V127H688V190H660" />
        <path d="M500 222H588" strokeWidth="15" />
        <path d="M505 260H541V335" />
        <path d="M622 326H577V260H614V291H585" />
        <path d="M688 218V337" />
        <circle cx="615" cy="100" r="14" strokeWidth="12" />
        <circle cx="688" cy="353" r="14" strokeWidth="12" />
      </svg>
    </div>
  )
}

export default function App() {
  return (
    <div className="relative flex h-screen flex-col overflow-hidden bg-[#fefefe] font-['Inter','Noto_Sans_CJK_SC',sans-serif] text-[#111]">
      <StatusBar />
      <NavBar />
      <Tabs />
      <main className="flex shrink-0 grow flex-col">
        <div className="relative mt-5">
          <RouteMap />
          <WeatherBadge />
          <a
            href="#legal"
            className="absolute bottom-6 left-[27px] border-b-2 border-[#777] text-[22px] leading-6 text-[#666]/80"
          >
            法律信息
          </a>
          <PaceLegend />
        </div>
        <Summary />
        <Assessment />
      </main>
      <div className="absolute bottom-5 left-1/2 h-3 w-[352px] -translate-x-1/2 rounded-full bg-black" />
      <Watermark />
    </div>
  )
}
